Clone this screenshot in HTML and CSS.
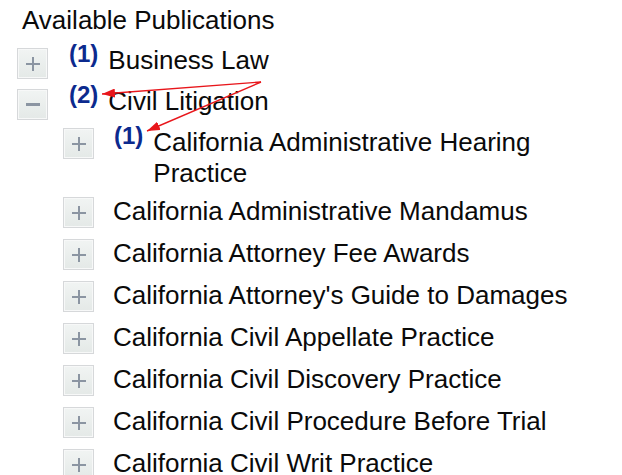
FILE: index.html
```html
<!DOCTYPE html>
<html lang="en">
<head>
<meta charset="utf-8">
<title>Available Publications</title>
<link rel="stylesheet" href="styles.css">
</head>
<body>
<div class="page">
  <div class="title">Available Publications</div>
  <ul class="tree level-1">
    <li class="node">
      <div class="row">
        <span class="toggle plus"></span>
        <span class="badge">(1)</span>
        <span class="label">Business Law</span>
      </div>
    </li>
    <li class="node">
      <div class="row">
        <span class="toggle minus"></span>
        <span class="badge">(2)</span>
        <span class="label">Civil Litigation</span>
      </div>
      <ul class="tree level-2">
        <li class="node">
          <div class="row">
            <span class="toggle plus"></span>
            <span class="badge">(1)</span>
            <span class="label">California Administrative Hearing Practice</span>
          </div>
        </li>
        <li class="node"><div class="row"><span class="toggle plus"></span><span class="label">California Administrative Mandamus</span></div></li>
        <li class="node"><div class="row"><span class="toggle plus"></span><span class="label">California Attorney Fee Awards</span></div></li>
        <li class="node"><div class="row"><span class="toggle plus"></span><span class="label">California Attorney's Guide to Damages</span></div></li>
        <li class="node"><div class="row"><span class="toggle plus"></span><span class="label">California Civil Appellate Practice</span></div></li>
        <li class="node"><div class="row"><span class="toggle plus"></span><span class="label">California Civil Discovery Practice</span></div></li>
        <li class="node"><div class="row"><span class="toggle plus"></span><span class="label">California Civil Procedure Before Trial</span></div></li>
        <li class="node"><div class="row"><span class="toggle plus"></span><span class="label">California Civil Writ Practice</span></div></li>
      </ul>
    </li>
  </ul>
  <svg class="arrows" width="622" height="475" viewBox="0 0 622 475" aria-hidden="true">
    <defs>
      <marker id="head" viewBox="0 0 13 9" refX="13" refY="4.5" markerWidth="13" markerHeight="9" markerUnits="userSpaceOnUse" orient="auto">
        <path d="M0,0 L13,4.5 L0,9 Z" fill="#e8161b"/>
      </marker>
    </defs>
    <line x1="261" y1="82" x2="102" y2="94" stroke="#e8161b" stroke-width="1.4" marker-end="url(#head)"/>
    <line x1="261" y1="82" x2="147" y2="131" stroke="#e8161b" stroke-width="1.4" marker-end="url(#head)"/>
  </svg>
</div>
</body>
</html>
```

FILE: styles.css
```css
html, body {
  margin: 0;
  padding: 0;
  background: #ffffff;
}

body {
  font-family: "Liberation Sans", Arial, Helvetica, sans-serif;
  font-size: 26px;
  color: #0a0a0a;
  overflow: hidden;
}

.page {
  position: relative;
  width: 622px;
  height: 475px;
  padding-top: 5px;
  box-sizing: border-box;
}

.title {
  line-height: 31px;
  padding-left: 22px;
}

.tree {
  list-style: none;
  margin: 0;
  padding: 0;
}

.level-1 {
  margin-top: 12px;
  padding-left: 17px;
}

.level-2 {
  margin-top: -2px;
  padding-left: 46px;
}

.row {
  display: flex;
  align-items: flex-start;
}

.toggle {
  flex: none;
  position: relative;
  width: 31px;
  height: 31px;
  box-sizing: border-box;
  border: 1px solid #d6d8da;
  box-shadow: inset 0 0 0 1px #f7f8f8;
  background: linear-gradient(#f1f4f3, #e4e9e7);
  margin-right: 19px;
}

.level-1 > .node > .row > .toggle {
  margin-bottom: 10px;
}

.level-2 > .node > .row > .toggle {
  margin-bottom: 11px;
}

.toggle::before,
.toggle::after {
  content: "";
  position: absolute;
  background: #8b95a2;
}

.toggle::before {
  left: 8px;
  top: 14px;
  width: 14px;
  height: 2px;
}

.toggle.plus::after {
  left: 14px;
  top: 8px;
  width: 2px;
  height: 14px;
}

.toggle.minus::before {
  top: 13px;
  height: 3px;
}

.badge {
  flex: none;
  font-weight: bold;
  font-size: 24px;
  line-height: 24px;
  color: #0c2a8e;
  margin-left: 2px;
  margin-right: 10px;
}

.label {
  line-height: 31px;
  padding-right: 4px;
}

.level-1 .badge {
  margin-top: -6px;
}

.level-1 .label {
  margin-top: -3px;
}

.level-2 .label {
  margin-top: -1px;
  margin-bottom: 8px;
}

.level-2 .badge {
  margin-top: -4px;
  margin-left: 1px;
}

.arrows {
  position: absolute;
  left: 0;
  top: 0;
  pointer-events: none;
}
```
